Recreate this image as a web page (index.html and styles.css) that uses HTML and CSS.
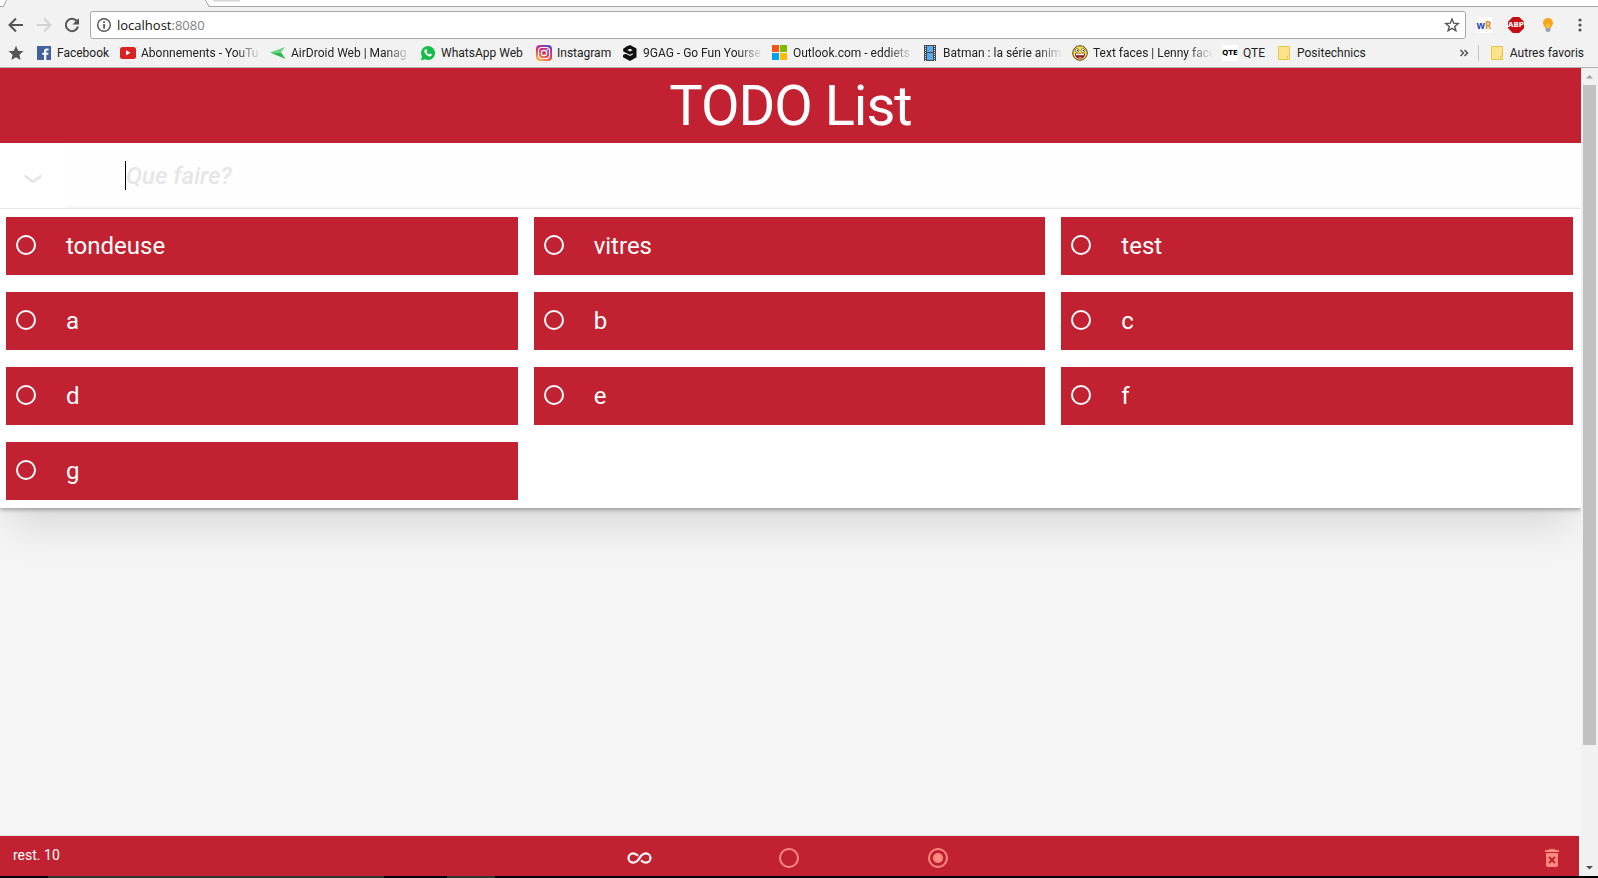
FILE: index.html
```html
<!DOCTYPE html>
<html lang="fr">
<head>
<meta charset="utf-8">
<title>TODO List</title>
<link rel="stylesheet" href="styles.css">
</head>
<body>
<header class="browser">
  <div class="tabs">
    <svg width="240" height="7" viewBox="0 0 240 7"><path d="M0 7V6.500H3L6.500 0H205L208 6.500H240V7z" fill="#f2f2f2"/><path d="M0 6.500H3.500L6.500 0M205.500 0L209 6.500H240" fill="none" stroke="#a6a6a6"/><path d="M212.500 0L214 1.500H240V0z" fill="#d6d6d6"/></svg>
  </div>
  <div class="toolbar">
    <button class="tool" aria-label="Retour"><svg width="16" height="16" viewBox="0 0 16 16"><path d="M15 8H2.500M8 1.500L1.500 8L8 14.500" fill="none" stroke="#555" stroke-width="2"/></svg></button>
    <button class="tool" aria-label="Suivant"><svg width="16" height="16" viewBox="0 0 16 16"><path d="M1 8H13.500M8 1.500L14.500 8L8 14.500" fill="none" stroke="#d3d3d3" stroke-width="2"/></svg></button>
    <button class="tool" aria-label="Actualiser"><svg width="16" height="16" viewBox="0 0 16 16"><path d="M12.800 4A6.200 6.200 0 1 0 14 9.500" fill="none" stroke="#555" stroke-width="2"/><path d="M15 1v6.500H8.500z" fill="#555"/></svg></button>
    <div class="address">
      <svg width="16" height="16" viewBox="0 0 16 16"><circle cx="8" cy="8" r="6.300" fill="none" stroke="#555" stroke-width="1.400"/><path d="M7.200 4.300h1.700v1.600H7.200zM7.200 7h1.700v4.700H7.200z" fill="#555"/></svg>
      <span class="url">localhost<span class="port">:8080</span></span>
      <button class="fav" aria-label="Ajouter aux favoris"><svg width="16" height="16" viewBox="0 0 16 16"><path d="M8 2l1.700 4.200 4.500.300-3.500 2.900 1.200 4.400L8 11.300l-3.900 2.500 1.200-4.400L1.800 6.500l4.500-.300z" fill="none" stroke="#555" stroke-width="1.400"/></svg></button>
    </div>
    <div class="extensions">
      <button class="ext" aria-label="WordReference"><span class="wr"><span class="w">w</span><span class="r">R</span></span></button>
      <button class="ext" aria-label="Adblock Plus"><span class="abp">ABP</span></button>
      <button class="ext" aria-label="Ampoule"><svg width="16" height="16" viewBox="0 0 16 16"><path d="M8 1a5 5 0 0 1 5 5c0 2.200-1.800 3.200-2.200 5H5.200C4.800 9.200 3 8.200 3 6a5 5 0 0 1 5-5z" fill="#f8a51b"/><path d="M6.500 6l1.500 2 1.500-2v5h-3z" fill="#ffc83d"/><path d="M5.500 11h5v2.500L9 15H7l-1.500-1.500z" fill="#9aa5ad"/></svg></button>
      <button class="ext menu" aria-label="Menu"><svg width="16" height="16" viewBox="0 0 16 16" fill="#555"><circle cx="8" cy="3" r="1.600"/><circle cx="8" cy="8" r="1.600"/><circle cx="8" cy="13" r="1.600"/></svg></button>
    </div>
  </div>
  <nav class="bookmarks">
    <a class="bm bm-star" href="#" aria-label="Favoris"><svg width="16" height="16" viewBox="0 0 16 16"><path d="M8 .8l2.100 5 5.300.5-4 3.500 1.200 5.300L8 12.300l-4.600 2.800 1.200-5.300-4-3.500 5.300-.5z" fill="#555"/></svg></a>
    <a class="bm bm-facebook" href="#"><svg width="16" height="16" viewBox="0 0 16 16"><path d="M1 1h14v14H1z" fill="#4460a0"/><path d="M10.300 15V9.800h1.900l.3-2.100h-2.200V6.500c0-.7.300-1 1.100-1h1.200V3.400h-1.800C8.900 3.400 8 4.500 8 6.200v1.500H6.200v2.100H8V15z" fill="#fff"/></svg><span>Facebook</span></a>
    <a class="bm bm-long" href="#"><svg width="16" height="16" viewBox="0 0 16 16"><rect y="2" width="16" height="12" rx="2.500" fill="#d92323"/><path d="M6 5.300v5l4.500-2.500z" fill="#fff"/></svg><span>Abonnements - YouTu</span></a>
    <a class="bm bm-long" href="#"><svg width="16" height="16" viewBox="0 0 16 16"><path d="M0 7.500L15 2l-4 5.500z" fill="#6ad583"/><path d="M0 7.500h11L15.500 14z" fill="#2db852"/></svg><span>AirDroid Web | Manag</span></a>
    <a class="bm bm-whatsapp" href="#"><svg width="16" height="16" viewBox="0 0 16 16"><path d="M1 15.500L2 11.500A7 7 0 1 1 5 14.300z" fill="#14bd47"/><path d="M5.300 4.200l1.200 0 .8 1.900-.8 1c.6 1.100 1.400 1.800 2.500 2.300l.9-1 1.900.9c.1 1.400-1 2.200-2.200 2.100C7 11 4.600 8.500 4.300 6.200c0-.8.300-1.500 1-2z" fill="#fff"/></svg><span>WhatsApp Web</span></a>
    <a class="bm bm-instagram" href="#"><svg width="16" height="16" viewBox="0 0 16 16"><defs><linearGradient id="ig" x1=".2" y1="1" x2=".7" y2="0"><stop offset="0" stop-color="#ffc247"/><stop offset=".45" stop-color="#e63b4f"/><stop offset=".75" stop-color="#c02e96"/><stop offset="1" stop-color="#6045c9"/></linearGradient></defs><rect width="16" height="16" rx="4" fill="url(#ig)"/><g fill="none" stroke="#fff" stroke-width="1.200"><rect x="2.500" y="2.500" width="11" height="11" rx="3"/><circle cx="8" cy="8" r="2.700"/></g><circle cx="11.300" cy="4.700" r=".8" fill="#fff"/></svg><span>Instagram</span></a>
    <a class="bm bm-long" href="#"><svg width="16" height="16" viewBox="0 0 16 16"><path d="M4.500 1.500L8 0l6.500 3.500v8.700L8 15.900 1 12.200V10l2.800-1.300L8 11l2.800-1.600V8.300L8 9.800 1.200 6.500V3.800z" fill="#111"/><path d="M8 3.800l2.700 1.300L8 6.600 5.300 5.100z" fill="#f2f2f2"/></svg><span>9GAG - Go Fun Yourse</span></a>
    <a class="bm bm-long" href="#"><svg width="16" height="16" viewBox="0 0 16 16"><path d="M0 0h7v7H0z" fill="#f65314"/><path d="M8 0h7v7H8z" fill="#7cbb00"/><path d="M0 8h7v7H0z" fill="#00a1f1"/><path d="M8 8h7v7H8z" fill="#ffbb00"/></svg><span>Outlook.com - eddiets</span></a>
    <a class="bm bm-long" href="#"><svg width="16" height="16" viewBox="0 0 16 16"><path d="M2 0h12v16H2z" fill="#484848"/><path d="M5 1h6v6H5zM5 8h6v7H5z" fill="#56aaf0"/><path d="M3.500 1v15M12.500 1v15" stroke="#ddd" stroke-dasharray="1 1"/></svg><span>Batman : la série anim</span></a>
    <a class="bm bm-long" href="#"><svg width="16" height="16" viewBox="0 0 16 16"><circle cx="8" cy="8" r="7.300" fill="#f7df4c" stroke="#55481e"/><g fill="#fff" stroke="#6d5d21" stroke-width=".8"><circle cx="5" cy="5.500" r="1.900"/><circle cx="11" cy="5.500" r="1.900"/></g><path d="M5 5h1v1H5zM11 5h1v1h-1z" fill="#222"/><path d="M3 8.500h10c0 7-10 7-10 0z" fill="#7a1638"/><path d="M4 8.800h8v1.400H4z" fill="#fff"/><path d="M5.500 13q2.500-3 5 0-2.500 1.500-5 0z" fill="#ed6ba0"/></svg><span>Text faces | Lenny face</span></a>
    <a class="bm bm-qte" href="#"><b class="qte" aria-hidden="true">QTE</b><span>QTE</span></a>
    <a class="bm" href="#"><svg width="16" height="16" viewBox="0 0 16 16"><path d="M2.500 1.500h11v13h-11z" fill="#ffe48c" stroke="#e8c54a"/><path d="M11.500 14.500v-3.500h2" fill="#fff0b5" stroke="#e8c54a"/></svg><span>Positechnics</span></a>
    <button class="more" aria-label="Plus de favoris"><svg width="10" height="10" viewBox="0 0 10 10"><path d="M1.500 2l3 3-3 3M5.500 2l3 3-3 3" fill="none" stroke="#555" stroke-width="1.500"/></svg></button>
    <a class="bm bm-other" href="#"><svg width="16" height="16" viewBox="0 0 16 16"><path d="M2.500 1.500h11v13h-11z" fill="#ffe48c" stroke="#e8c54a"/><path d="M11.500 14.500v-3.500h2" fill="#fff0b5" stroke="#e8c54a"/></svg><span>Autres favoris</span></a>
  </nav>
</header>
<div class="viewport">
  <div class="page">
    <main class="app">
      <h1 class="title">TODO List</h1>
      <div class="entry">
        <button class="toggle-all" aria-label="Tout cocher"><svg width="18" height="12" viewBox="0 0 18 12"><path d="M0.500 1v3.500L9 10.500l8.500-6V1L9 7z" fill="#e6e6e6"/></svg></button>
        <div class="field">
          <i class="caret"></i>
          <input class="new-todo" type="text" placeholder="Que faire?" aria-label="Que faire?">
        </div>
      </div>
      <ul class="todos">
        <li class="todo"><input class="check" type="checkbox" id="t1"><label for="t1">tondeuse</label></li>
        <li class="todo"><input class="check" type="checkbox" id="t2"><label for="t2">vitres</label></li>
        <li class="todo"><input class="check" type="checkbox" id="t3"><label for="t3">test</label></li>
        <li class="todo"><input class="check" type="checkbox" id="t4"><label for="t4">a</label></li>
        <li class="todo"><input class="check" type="checkbox" id="t5"><label for="t5">b</label></li>
        <li class="todo"><input class="check" type="checkbox" id="t6"><label for="t6">c</label></li>
        <li class="todo"><input class="check" type="checkbox" id="t7"><label for="t7">d</label></li>
        <li class="todo"><input class="check" type="checkbox" id="t8"><label for="t8">e</label></li>
        <li class="todo"><input class="check" type="checkbox" id="t9"><label for="t9">f</label></li>
        <li class="todo"><input class="check" type="checkbox" id="t10"><label for="t10">g</label></li>
      </ul>
    </main>
    <footer class="footer">
      <span class="count">rest. 10</span>
      <div class="filters">
        <button class="filter active" aria-label="Toutes"><svg width="26" height="24" viewBox="0 0 26 24"><path d="M11 9.800C9.500 8.300 8.200 7.300 6.200 7.300a4.700 4.700 0 0 0 0 9.400c2 0 3.300-1 4.800-2.500l3-4.400c1.500-1.500 2.800-2.500 4.800-2.500a4.700 4.700 0 0 1 0 9.400c-2 0-3.300-1-4.800-2.500" fill="none" stroke="currentColor" stroke-width="2.200"/></svg></button>
        <button class="filter" aria-label="Actives"><svg width="24" height="24" viewBox="0 0 24 24"><circle cx="12" cy="12" r="9" fill="none" stroke="currentColor" stroke-width="2"/></svg></button>
        <button class="filter" aria-label="Terminées"><svg width="24" height="24" viewBox="0 0 24 24"><circle cx="12" cy="12" r="9" fill="none" stroke="currentColor" stroke-width="2"/><circle cx="12" cy="12" r="5" fill="currentColor"/></svg></button>
      </div>
      <button class="clear" aria-label="Supprimer les tâches terminées"><svg width="24" height="24" viewBox="0 0 24 24"><path d="M5 4h3.500l1-1h5l1 1H19v2H5zM6 7h12v12a2 2 0 0 1-2 2H8a2 2 0 0 1-2-2z" fill="currentColor"/><path d="M9 11l6 6M15 11l-6 6" stroke="#c22131" stroke-width="2"/></svg></button>
    </footer>
  </div>
  <div class="scrollbar" aria-hidden="true">
    <svg width="17" height="17" viewBox="0 0 17 17"><path d="M5 10.500h7L8.500 7z" fill="#a3a3a3"/></svg>
    <div class="track"><div class="thumb"></div></div>
    <svg width="17" height="17" viewBox="0 0 17 17"><path d="M5 7h7l-3.500 3.500z" fill="#505050"/></svg>
  </div>
</div>
<div class="taskbar"></div>
</body>
</html>
```

FILE: styles.css
```css
* { box-sizing: border-box; }

body {
  margin: 0;
  height: 100vh;
  display: flex;
  flex-direction: column;
  overflow: hidden;
  font-family: Roboto, "Liberation Sans", sans-serif;
}

button {
  display: flex;
  align-items: center;
  justify-content: center;
  padding: 0;
  border: 0;
  background: none;
  font: inherit;
  color: inherit;
}

svg { display: block; flex: none; }

/* Browser chrome */
.browser {
  flex: none;
  background: #f2f2f2;
  border-bottom: 1px solid #b0b0b0;
  font-family: "Open Sans", "Noto Sans", sans-serif;
}

.tabs {
  height: 7px;
  background: #fff;
  border-bottom: 1px solid #a6a6a6;
}
.tabs svg { height: 7px; }

.toolbar {
  display: flex;
  align-items: center;
  padding: 4px 10px 0 8px;
}
.tool { width: 16px; height: 28px; margin-right: 12px; }
.tool + .tool + .tool { margin-right: 10px; }

.address {
  flex: 1;
  display: flex;
  align-items: center;
  height: 28px;
  padding: 0 5px;
  background: #fff;
  border: 1px solid #a9a9a9;
  border-radius: 3px;
}
.url { flex: 1; margin-left: 5px; font-size: 13px; line-height: 20px; color: #111; }
.port { color: #808080; }

.extensions { display: flex; gap: 16px; margin-left: 10px; }
.ext { width: 16px; height: 16px; }
.wr {
  width: 16px;
  height: 16px;
  background: #fff;
  border-radius: 2px;
  font: bold 10px/16px "Open Sans", sans-serif;
}
.w { color: #2448b5; }
.r { color: #e88b28; }
.abp {
  width: 16px;
  height: 16px;
  background: #c70d12;
  clip-path: polygon(30% 0, 70% 0, 100% 30%, 100% 70%, 70% 100%, 30% 100%, 0 70%, 0 30%);
  color: #fff;
  font: bold 7px/16px "DejaVu Sans", sans-serif;
}

.bookmarks {
  display: flex;
  align-items: center;
  height: 28px;
  padding: 0 14px 0 8px;
  font-family: Roboto, sans-serif;
}
.bm {
  display: flex;
  align-items: center;
  gap: 5px;
  flex: none;
  color: #222;
  font-size: 12px;
  line-height: 20px;
  text-decoration: none;
  white-space: nowrap;
}
.bm-star { width: 28px; }
.bm-facebook { width: 84px; }
.bm-whatsapp { width: 116px; }
.bm-instagram { width: 86px; }
.bm-qte { width: 54px; }
.bm-long { width: 150px; }
.bm-long span {
  width: 120px;
  mask-image: linear-gradient(to right, #000 95px, transparent 120px);
}
.qte {
  width: 16px;
  height: 16px;
  background: #fff;
  color: #000;
  font: bold 7px/16px "DejaVu Sans", sans-serif;
  text-align: center;
}
.more { margin: 0 9px 0 auto; height: 16px; }
.bm-other { padding-left: 10px; border-left: 1px solid #c4c4c4; line-height: 16px; }

/* Document area */
.viewport { flex: 1; display: flex; min-height: 0; }

.page {
  flex: 1;
  display: flex;
  flex-direction: column;
  justify-content: space-between;
  overflow: hidden;
  background: #f5f5f5;
}

.app {
  background: #fff;
  box-shadow: 0 2px 4px rgba(0, 0, 0, 0.3), 0 25px 40px -8px rgba(0, 0, 0, 0.12);
}

.title {
  margin: 0;
  padding-top: 2px;
  background: #c22131;
  color: #fff;
  font-size: 56px;
  font-weight: 400;
  line-height: 73px;
  text-align: center;
  letter-spacing: -1px;
}

.entry {
  display: flex;
  height: 66px;
  border-bottom: 1px solid #e6e6e6;
}
.toggle-all { width: 65px; padding-top: 6px; }
.field {
  flex: 1;
  display: flex;
  align-items: center;
  padding-left: 60px;
  background: #fefefe;
  box-shadow: inset 0 -2px 1px rgba(0, 0, 0, 0.03);
}
.caret { width: 1px; height: 29px; background: #000; }
.new-todo {
  flex: 1;
  padding: 0;
  border: 0;
  outline: 0;
  background: none;
  font: 24px/32px Roboto, sans-serif;
}
.new-todo::placeholder { color: #e6e6e6; font-style: italic; font-weight: 500; opacity: 1; }

.todos {
  display: grid;
  grid-template-columns: repeat(3, 1fr);
  gap: 17px 16px;
  margin: 0;
  padding: 8px 8px 8px 6px;
  list-style: none;
}
.todo {
  display: flex;
  align-items: center;
  height: 58px;
  padding-left: 10px;
  background: #c22131;
  color: #fff;
  font-size: 24px;
  line-height: 32px;
}
.check {
  appearance: none;
  width: 20px;
  height: 20px;
  margin: 0 30px 2px 0;
  border: 2px solid #fff;
  border-radius: 50%;
}

.footer {
  display: flex;
  align-items: center;
  height: 41px;
  margin-right: 2px;
  padding: 0 15px 0 13px;
  border-top: 1px solid #e6e6e6;
  background: #c22131;
  background-clip: padding-box;
  color: #ff8a80;
}
.count { flex: 1; padding-bottom: 2px; color: #fff; font-size: 14px; line-height: 20px; }
.filters { display: flex; gap: 125px; padding-top: 4px; }
.filter { width: 24px; height: 24px; }
.active { color: #fff; }
.clear { flex: 1; justify-content: flex-end; padding-top: 4px; }

.scrollbar {
  flex: none;
  display: flex;
  flex-direction: column;
  width: 17px;
  background: #f1f1f1;
}
.track { flex: 1; padding: 0 2px; }
.thumb { height: calc(100% * 29 / 34); background: #c1c1c1; }

.taskbar {
  flex: none;
  height: 2px;
  background: linear-gradient(to right, #000 3%, #333 3% 24%, #000 24% 28%, #333 28% 31%, #000 31%);
}
```
